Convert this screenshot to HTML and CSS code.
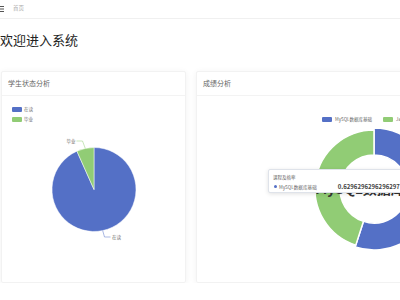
FILE: index.html
```html
<!DOCTYPE html>
<html lang="zh">
<head>
<meta charset="utf-8">
<title>欢迎进入系统</title>
<link rel="stylesheet" href="styles.css">
</head>
<body>
<div class="page">
  <header class="topbar">
    <svg class="menu-icon" width="4" height="6" viewBox="0 0 4 6">
      <rect x="0" y="0" width="4" height="1" fill="#555"/>
      <rect x="0" y="2.5" width="4" height="1" fill="#555"/>
      <rect x="0" y="5" width="4" height="1" fill="#555"/>
    </svg>
    <span class="crumb">首页</span>
  </header>

  <h1 class="welcome">欢迎进入系统</h1>

  <div class="cards">
    <section class="card card-status">
      <div class="card-header">学生状态分析</div>
      <div class="card-body">
        <svg class="chart" width="183" height="186" viewBox="0 0 183 186">
          <rect x="10" y="11" width="10" height="5" rx="1" fill="#5470c6"/>
          <text x="22" y="15.3" class="legend-text">在读</text>
          <rect x="10" y="21" width="10" height="5" rx="1" fill="#91cc75"/>
          <text x="22" y="25.3" class="legend-text">毕业</text>

          <path d="M92,93.5 L92,51.5 A42,42 0 1,1 74.92,55.13 Z" fill="#5470c6" stroke="#fff" stroke-width="0.5"/>
          <path d="M92,93.5 L74.92,55.13 A42,42 0 0,1 92,51.5 Z" fill="#91cc75" stroke="#fff" stroke-width="0.5"/>

          <polyline points="83.3,52.4 80.5,45 74.5,45" fill="none" stroke="#91cc75" stroke-width="0.5"/>
          <text x="73.5" y="46.6" text-anchor="end" class="pie-label">毕业</text>
          <polyline points="100.7,134.6 102.5,141 108.5,141" fill="none" stroke="#5470c6" stroke-width="0.5"/>
          <text x="110" y="142.6" class="pie-label">在读</text>
        </svg>
      </div>
    </section>

    <section class="card card-score">
      <div class="card-header">成绩分析</div>
      <div class="card-body">
        <svg class="chart" width="359" height="186" viewBox="0 0 359 186">
          <rect x="125" y="21" width="10" height="5" rx="1" fill="#5470c6"/>
          <text x="138" y="25.3" class="legend-text">MySQL数据库基础</text>
          <rect x="186" y="21" width="10" height="5" rx="1" fill="#91cc75"/>
          <text x="199" y="25.3" class="legend-text">Java程序设计</text>

          <path d="M177,32 A61,61 0 1,1 158.15,151.02 L166.49,125.34 A34,34 0 1,0 177,59 Z" fill="#5470c6" stroke="#fff" stroke-width="1.5" stroke-linejoin="round"/>
          <path d="M158.77,149.11 A59,59 0 0,1 177,34 L177,59 A34,34 0 0,0 166.49,125.34 Z" fill="#91cc75" stroke="#fff" stroke-width="1.5" stroke-linejoin="round"/>

          <text x="177" y="97.5" text-anchor="middle" class="center-label">MySQL数据库基础</text>
        </svg>
        <div class="tooltip">
          <div class="tip-title">课程及格率</div>
          <div class="tip-row">
            <span class="tip-dot"></span>
            <span class="tip-name">MySQL数据库基础</span>
            <span class="tip-value">0.6296296296296297</span>
          </div>
        </div>
      </div>
    </section>
  </div>
</div>
</body>
</html>
```

FILE: styles.css
```css
html, body {
  margin: 0;
  padding: 0;
  overflow: hidden;
  background: #ffffff;
}

body {
  font-family: "Noto Sans CJK SC", "Noto Sans", "Liberation Sans", sans-serif;
  color: #333;
}

.page {
  width: 600px;
}

.topbar {
  height: 18px;
  display: flex;
  align-items: center;
  border-bottom: 1px solid #f0f0f0;
}

.menu-icon {
  display: block;
}

.crumb {
  margin-left: 9px;
  font-size: 5.5px;
  color: #aaa;
  line-height: 1;
}

.welcome {
  margin: 12px 0 22px 0;
  font-size: 13px;
  line-height: 18px;
  font-weight: normal;
  color: #222;
}

.cards {
  display: flex;
  gap: 10px;
  padding-left: 1px;
}

.card {
  height: 212px;
  box-sizing: border-box;
  border: 1px solid #f2f2f2;
  border-radius: 2px;
  background: #fff;
  box-shadow: 0 1px 6px rgba(0, 0, 0, 0.06);
  display: flex;
  flex-direction: column;
}

.card-status {
  width: 185px;
}

.card-score {
  width: 361px;
}

.card-header {
  height: 23px;
  line-height: 23px;
  padding: 0 6px;
  font-size: 7px;
  color: #666;
  border-bottom: 1px solid #f3f3f3;
}

.card-body {
  position: relative;
  flex: 1;
}

.chart {
  display: block;
}

.legend-text {
  font-size: 4.5px;
  fill: #666;
}

.pie-label {
  font-size: 4.5px;
  fill: #666;
}

.center-label {
  font-size: 14px;
  font-weight: bold;
  fill: #333;
}

.tooltip {
  position: absolute;
  left: 71px;
  top: 73px;
  width: 200px;
  height: 24px;
  box-sizing: border-box;
  padding: 4px 4px;
  background: #fff;
  border: 1px solid #dfe3ea;
  border-radius: 2px;
  box-shadow: 0 1px 4px rgba(0, 0, 0, 0.12);
}

.tip-title {
  font-size: 4.5px;
  line-height: 6px;
  color: #666;
}

.tip-row {
  display: flex;
  align-items: center;
  margin-top: 3px;
  height: 7px;
}

.tip-dot {
  width: 3px;
  height: 3px;
  border-radius: 50%;
  background: #5470c6;
  margin-left: 1px;
  margin-right: 2px;
}

.tip-name {
  font-size: 4.6px;
  color: #666;
}

.tip-value {
  margin-left: 21px;
  font-size: 6px;
  font-weight: bold;
  color: #444;
  white-space: nowrap;
}
```
